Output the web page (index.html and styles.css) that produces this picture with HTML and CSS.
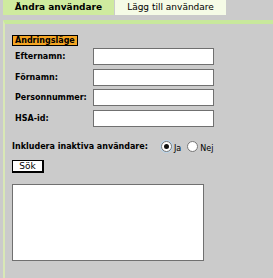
FILE: index.html
```html
<!DOCTYPE html>
<html lang="sv">
<head>
  <meta charset="UTF-8">
  <title>Ändra användare</title>
  <link rel="stylesheet" href="styles.css">
</head>
<body>

  <div class="tabs">
    <div class="tab tab-active">Ändra användare</div>
    <div class="tab tab-idle">Lägg till användare</div>
  </div>

  <div class="panel">
    <span class="mode">Ändringsläge</span>

    <div class="fields">
      <label class="field-label">Efternamn:</label>
      <input class="field-input" type="text">
      <label class="field-label">Förnamn:</label>
      <input class="field-input" type="text">
      <label class="field-label">Personnummer:</label>
      <input class="field-input" type="text">
      <label class="field-label">HSA-id:</label>
      <input class="field-input" type="text">
    </div>

    <div class="inactive">
      <span class="inactive-label">Inkludera inaktiva användare:</span>
      <span class="radio checked"></span><span class="radio-text">Ja</span>
      <span class="radio"></span><span class="radio-text">Nej</span>
    </div>

    <button class="search">Sök</button>

    <div class="results"></div>
  </div>

</body>
</html>
```

FILE: styles.css
```css
body {
    margin: 0;
    background-color: #cbcbcb;
    font-family: 'DejaVu Sans', Verdana, sans-serif;
    color: #000;
    height: 278px;
    overflow: hidden;
}

.tabs {
    display: flex;
    padding-left: 3px;
    height: 15px;
}

.tab {
    width: 111px;
    font-size: 9px;
    line-height: 15px;
    text-align: center;
}

.tab-active {
    background-color: #cfeb9f;
    font-weight: bold;
}

.tab-idle {
    margin-left: 1px;
    background-color: #f5fbe6;
}

.panel {
    box-sizing: border-box;
    margin: 5px 0 0 3px;
    border-top: 4px solid #c8e89c;
    border-left: 2px solid #d9e8b6;
    padding: 4px 0 0 7px;
    height: 258px;
}

.mode {
    display: inline-block;
    background-color: #f5a623;
    border: 1px solid #000;
    font-size: 8px;
    font-weight: bold;
    line-height: 9px;
    padding: 0 2px;
}

.fields {
    display: grid;
    grid-template-columns: 81px 122px;
    grid-auto-rows: 17px;
    row-gap: 3.5px;
    margin-top: 1px;
    align-items: center;
}

.field-label {
    padding-left: 3px;
    font-size: 8px;
    font-weight: bold;
}

.field-input {
    box-sizing: border-box;
    height: 17px;
    width: 121px;
    margin: 0;
    border: 1px solid #707070;
    background-color: #fff;
}

.inactive {
    display: flex;
    align-items: center;
    margin-top: 13px;
    font-size: 8px;
}

.inactive-label {
    font-weight: bold;
    width: 149px;
}

.radio {
    display: inline-block;
    box-sizing: border-box;
    width: 11px;
    height: 11px;
    border: 1px solid #777;
    border-radius: 50%;
    background-color: #fff;
    position: relative;
}

.radio.checked {
    box-shadow: 0 0 0 1px #b8d4ea;
}

.radio.checked::after {
    content: "";
    position: absolute;
    left: 2px;
    top: 2px;
    width: 5px;
    height: 5px;
    border-radius: 50%;
    background-color: #111;
}

.radio-text {
    margin: 4px 6px 0 2px;
}

.search {
    display: block;
    margin: 7px 0 0 0;
    padding: 0;
    width: 32px;
    height: 13px;
    background-color: #fff;
    border: 1px solid #000;
    border-right-width: 2px;
    border-bottom-width: 2px;
    font-family: 'DejaVu Sans', sans-serif;
    font-size: 9px;
    line-height: 10px;
}

.results {
    box-sizing: border-box;
    margin-top: 11px;
    width: 192px;
    height: 77px;
    background-color: #fff;
    border: 1px solid #707070;
}
```
